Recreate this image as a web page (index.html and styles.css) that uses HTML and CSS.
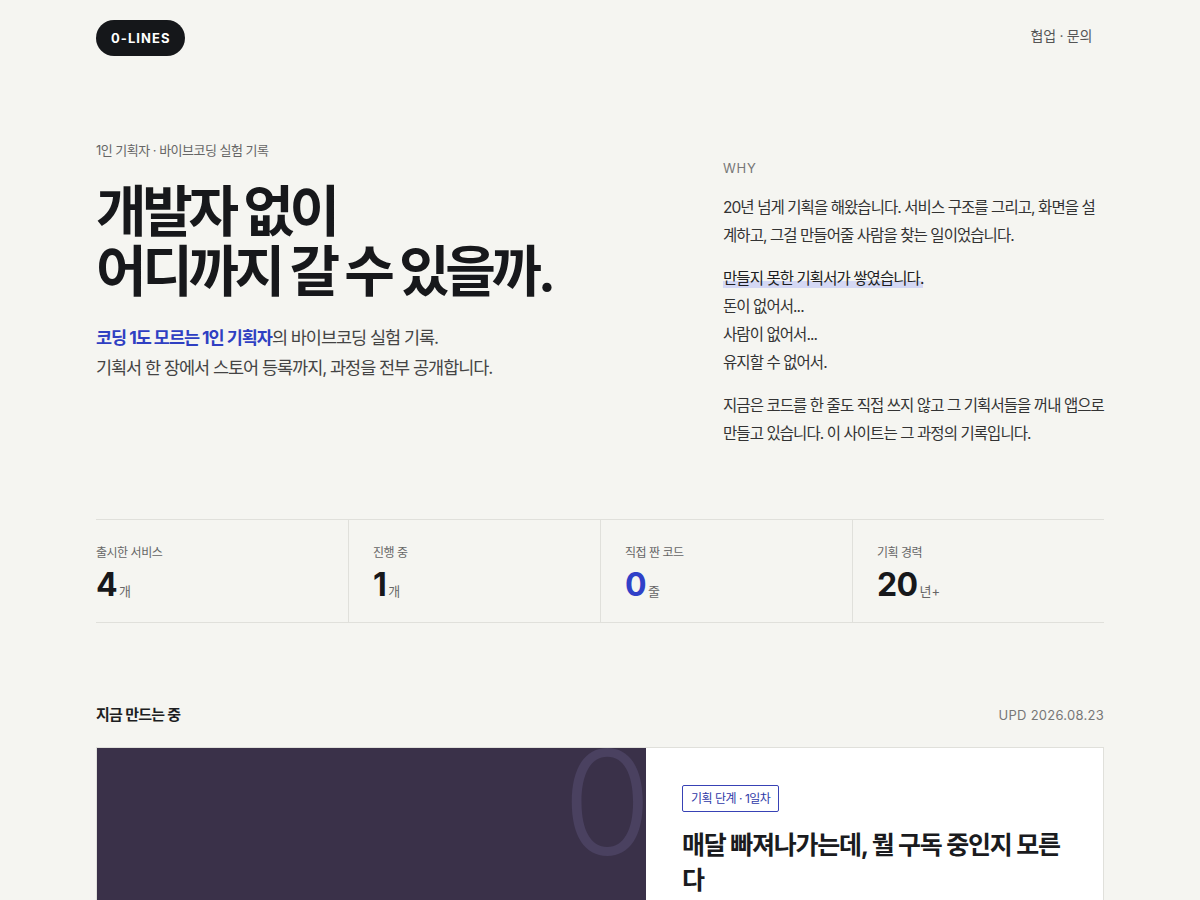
FILE: index.html
```html
<!DOCTYPE html>
<html lang="ko">
<head>
<meta charset="utf-8">
<title>0-LINES</title>
<link rel="stylesheet" href="styles.css">
</head>
<body>
<div class="page">
  <header class="topbar">
    <a class="logo" href="#">0-LINES</a>
    <a class="contact" href="#">협업 · 문의</a>
  </header>

  <section class="hero">
    <div class="hero-left">
      <p class="eyebrow">1인 기획자 · 바이브코딩 실험 기록</p>
      <h1 class="headline">개발자 없이<br>어디까지 갈 수 있을까.</h1>
      <p class="lead"><strong>코딩 1도 모르는 1인 기획자</strong>의 바이브코딩 실험 기록.<br>기획서 한 장에서 스토어 등록까지, 과정을 전부 공개합니다.</p>
    </div>
    <div class="hero-right">
      <p class="why-label">WHY</p>
      <p class="why-text">20년 넘게 기획을 해왔습니다. 서비스 구조를 그리고, 화면을 설계하고, 그걸 만들어줄 사람을 찾는 일이었습니다.</p>
      <p class="why-text"><mark class="hl">만들지 못한 기획서가 쌓였습니다.</mark><br>돈이 없어서...<br>사람이 없어서...<br>유지할 수 없어서.</p>
      <p class="why-text">지금은 코드를 한 줄도 직접 쓰지 않고 그 기획서들을 꺼내 앱으로 만들고 있습니다. 이 사이트는 그 과정의 기록입니다.</p>
    </div>
  </section>

  <section class="stats">
    <div class="stat">
      <p class="stat-label">출시한 서비스</p>
      <p class="stat-value"><span class="num">4</span><span class="unit">개</span></p>
    </div>
    <div class="stat">
      <p class="stat-label">진행 중</p>
      <p class="stat-value"><span class="num">1</span><span class="unit">개</span></p>
    </div>
    <div class="stat">
      <p class="stat-label">직접 짠 코드</p>
      <p class="stat-value"><span class="num blue">0</span><span class="unit">줄</span></p>
    </div>
    <div class="stat">
      <p class="stat-label">기획 경력</p>
      <p class="stat-value"><span class="num">20</span><span class="unit">년+</span></p>
    </div>
  </section>

  <section class="now">
    <div class="now-head">
      <h2 class="now-title">지금 만드는 중</h2>
      <span class="upd">UPD 2026.08.23</span>
    </div>
    <article class="card">
      <div class="card-visual">
        <span class="big-zero">0</span>
      </div>
      <div class="card-body">
        <span class="badge">기획 단계 · 1일차</span>
        <h3 class="card-title">매달 빠져나가는데, 뭘 구독 중인지 모른다</h3>
      </div>
    </article>
  </section>
</div>
</body>
</html>
```

FILE: styles.css
```css
* { box-sizing: border-box; }

html, body {
  margin: 0;
  padding: 0;
  background: #f5f5f1;
}

body {
  font-family: Inter, "Noto Sans CJK KR", sans-serif;
  color: #1a1b1e;
}

p, h1, h2, h3 { margin: 0; }

a { text-decoration: none; }

.page {
  width: 1008px;
  margin: 0 auto;
}

/* header */
.topbar {
  display: flex;
  justify-content: space-between;
  align-items: center;
  padding: 20px 0;
}

.logo {
  display: inline-flex;
  align-items: center;
  height: 36px;
  padding: 0 15px;
  border-radius: 18px;
  background: #15171a;
  color: #fff;
  font-size: 13px;
  font-weight: 700;
  letter-spacing: 0.08em;
}

.contact {
  padding: 2px 12px 8px;
  font-size: 14px;
  color: #555;
  letter-spacing: -0.02em;
}

/* hero */
.hero {
  display: grid;
  grid-template-columns: 1fr 381px;
  column-gap: 120px;
  padding-top: 64px;
}

.eyebrow {
  font-size: 13px;
  line-height: 20px;
  color: #666;
  letter-spacing: -0.04em;
}

.headline {
  margin-top: 21px;
  font-size: 55px;
  line-height: 60px;
  font-weight: 700;
  letter-spacing: -0.08em;
  color: #17181b;
}

.lead {
  margin-top: 22px;
  font-size: 17.5px;
  line-height: 30px;
  color: #444;
  letter-spacing: -0.06em;
}

.lead strong {
  color: #2f3fc2;
  font-weight: 700;
}

.hero-right {
  padding-top: 18px;
}

.why-label {
  font-size: 13px;
  line-height: 20px;
  color: #777;
  letter-spacing: 0.06em;
  margin-bottom: 16px;
}

.why-text {
  font-size: 15.5px;
  line-height: 28px;
  color: #333;
  letter-spacing: -0.06em;
}

.why-text + .why-text {
  margin-top: 15px;
}

.hl {
  background: linear-gradient(to bottom, transparent 62%, #d4d8f4 62%, #d4d8f4 100%);
  color: #1d1e22;
}

/* stats */
.stats {
  margin-top: 71px;
  display: grid;
  grid-template-columns: repeat(4, 1fr);
  border-top: 1px solid #e0e0db;
  border-bottom: 1px solid #e0e0db;
}

.stat {
  padding: 24px 24px 17px;
  border-left: 1px solid #e0e0db;
}

.stat:first-child {
  border-left: 0;
  padding-left: 0;
}

.stat-label {
  font-size: 12px;
  line-height: 18px;
  color: #666;
  letter-spacing: -0.04em;
}

.stat-value {
  margin-top: 3px;
  height: 40px;
  display: flex;
  align-items: baseline;
  gap: 2px;
  line-height: 40px;
}

.num {
  font-size: 32px;
  font-weight: 700;
  letter-spacing: -0.02em;
  color: #17181b;
}

.num.blue { color: #3040c8; }

.unit {
  font-size: 13px;
  line-height: 40px;
  color: #666;
}

/* now */
.now {
  margin-top: 81px;
}

.now-head {
  display: flex;
  justify-content: space-between;
  align-items: center;
  line-height: 22px;
}

.now-title {
  font-size: 15px;
  font-weight: 600;
  color: #1d1e22;
  letter-spacing: -0.05em;
}

.upd {
  font-size: 13px;
  color: #777;
  letter-spacing: 0.02em;
}

.card {
  margin-top: 21px;
  display: grid;
  grid-template-columns: 549px 1fr;
  min-height: 320px;
  border: 1px solid #e0e0db;
  background: #fff;
}

.card-visual {
  position: relative;
  overflow: hidden;
  background: #3a3149;
}

.big-zero {
  position: absolute;
  top: -18px;
  right: -6px;
  font-size: 145px;
  line-height: 1;
  font-weight: 300;
  color: #4a4160;
}

.card-body {
  padding: 37px 36px 36px;
}

.badge {
  display: inline-block;
  height: 27px;
  padding: 0 8px;
  line-height: 25px;
  border: 1px solid #3842b5;
  border-radius: 2px;
  font-size: 12px;
  color: #2f3aa8;
  letter-spacing: -0.04em;
}

.card-title {
  margin-top: 16px;
  font-size: 25px;
  line-height: 35px;
  font-weight: 700;
  letter-spacing: -0.05em;
  color: #1a1b1e;
}
```
